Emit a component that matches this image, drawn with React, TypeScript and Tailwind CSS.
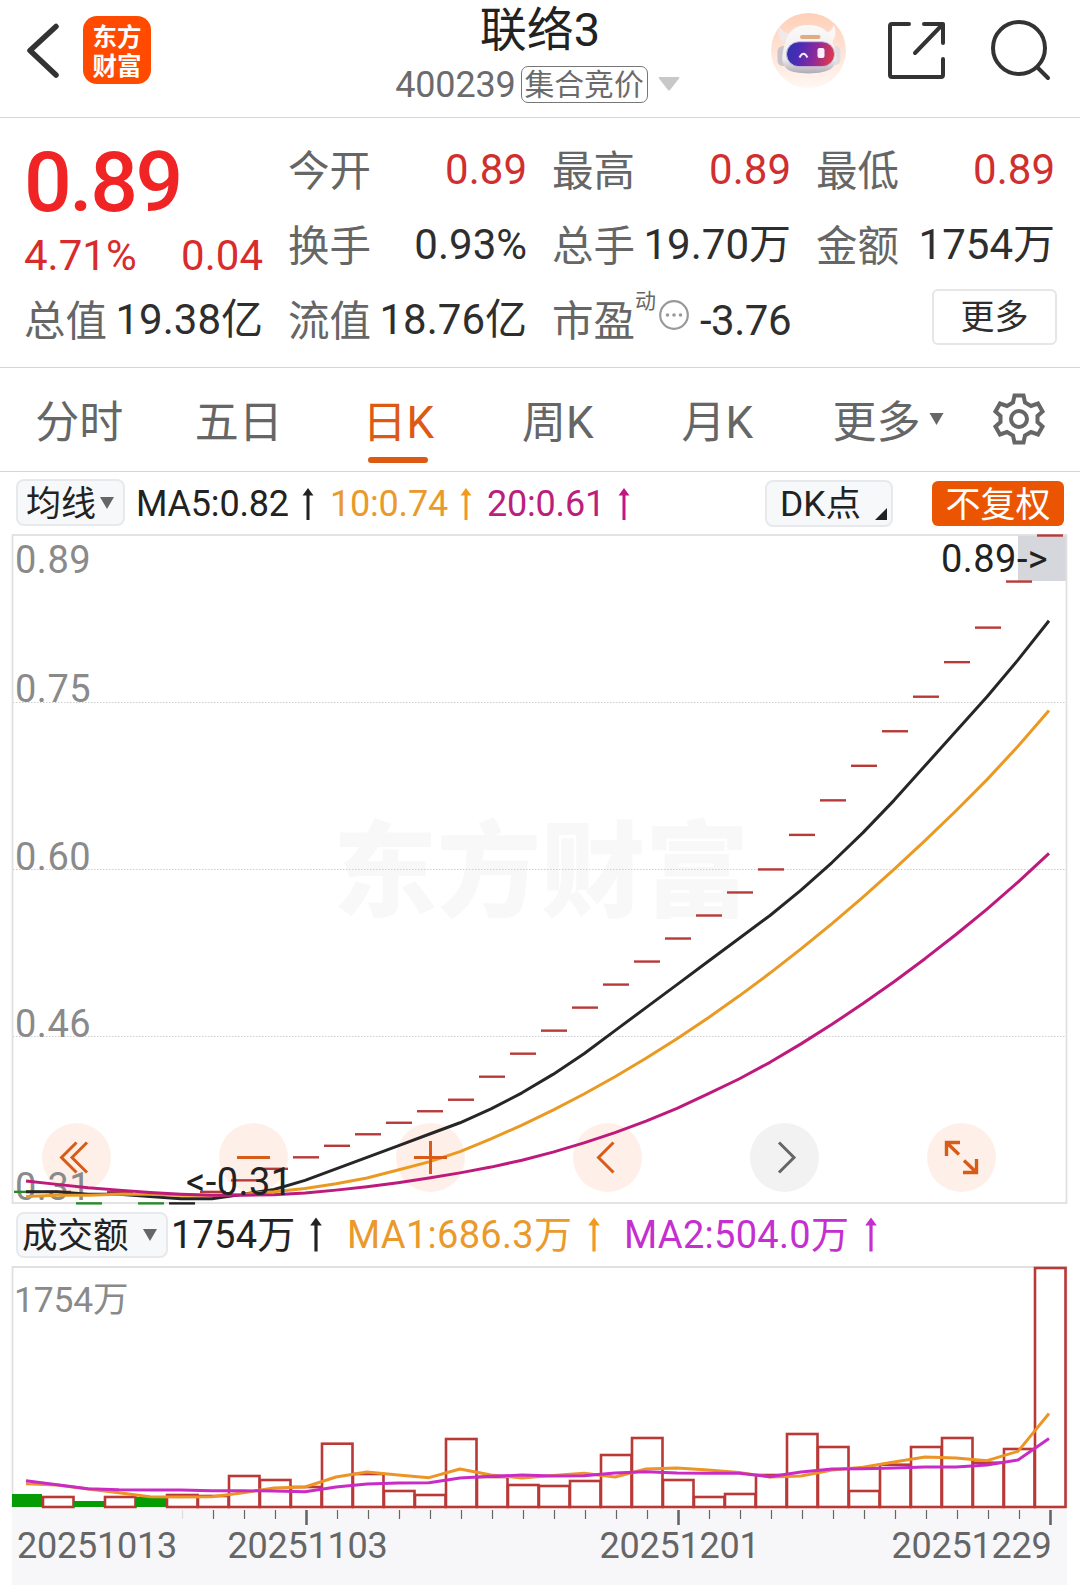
import { clsx } from 'clsx'

const closes = [
  0.32, 0.32, 0.31, 0.32, 0.31, 0.31, 0.32, 0.33, 0.34, 0.35, 0.36, 0.37, 0.38, 0.39, 0.4, 0.42, 0.44,
  0.46, 0.48, 0.5, 0.52, 0.54, 0.56, 0.58, 0.6, 0.63, 0.66, 0.69, 0.72, 0.75, 0.78, 0.81, 0.85, 0.89,
]
// closes before the visible range, only used by the averages
const history = [
  0.38, 0.37, 0.36, 0.35, 0.34, 0.34, 0.33, 0.33, 0.32, 0.31, 0.31, 0.31, 0.31, 0.31, 0.32, 0.32, 0.32,
  0.32, 0.32,
]

const volumeTops = [
  1494, 1497, 1501, 1497, 1497, 1495, 1496, 1476, 1480, 1487, 1443.7, 1474, 1491, 1495, 1439, 1477, 1485,
  1486, 1481, 1455, 1438, 1480, 1497, 1494, 1475, 1434, 1447, 1491, 1464.7, 1447, 1438, 1462.7, 1449,
  1268,
]
const volumeMa1 = [
  1483.7, 1485, 1489, 1492.7, 1496.7, 1497, 1496.7, 1492.7, 1488, 1487, 1477, 1472, 1475, 1477.7, 1469,
  1475, 1478, 1475.5, 1473.3, 1477, 1469, 1468, 1470, 1472.5, 1477, 1476, 1470, 1467.3, 1462, 1457, 1458,
  1460.7, 1451.3, 1413.5,
]
const volumeMa2 = [
  1480.7, 1484.8, 1488.7, 1489.7, 1490, 1490, 1490.7, 1490.7, 1491, 1491.7, 1487, 1484, 1483, 1482.7,
  1478, 1476.3, 1475, 1476, 1475.7, 1473, 1471.7, 1473, 1473.3, 1473.3, 1476.7, 1472, 1469, 1468.7, 1468,
  1467, 1467, 1465, 1460, 1438.5,
]

const centerX = (i: number) => 27 + i * 31
const priceY = (p: number) => 535.5 + (0.89 - p) * 1151.5
const toPoints = (ys: number[]) => ys.map((y, i) => `${centerX(i) - 1},${y}`).join(' ')

const average = (n: number) => {
  const all = [...history, ...closes]
  return closes.map((_, i) => {
    const end = history.length + i + 1
    const part = all.slice(end - n, end)
    return priceY(part.reduce((a, b) => a + b, 0) / n)
  })
}

const candleColor = (i: number) => {
  if (i === 5) return '#222222'
  return [0, 2, 4].includes(i) ? '#2a8a2a' : '#b83a38'
}

function Caret({ className }: { className?: string }) {
  return (
    <svg viewBox="0 0 14 12" className={className} fill="currentColor">
      <path d="M0 0H14L7 12Z" />
    </svg>
  )
}

function UpArrow({ className }: { className?: string }) {
  return (
    <svg viewBox="0 0 12 34" className={clsx('w-3 shrink-0', className)} fill="currentColor">
      <path d="M6 0L11.8 8H7.6V34H4.400V8H0.2Z" />
    </svg>
  )
}

function Robot() {
  return (
    <svg viewBox="0 0 75 75" className="size-[75px]">
      <defs>
        <linearGradient id="halo" x1="0" y1="0" x2="0" y2="1">
          <stop offset="0" stopColor="#ffcfb8" />
          <stop offset="1" stopColor="#fff7f3" />
        </linearGradient>
        <linearGradient id="visor" x1="0" y1="0" x2="1" y2="0.15">
          <stop offset="0" stopColor="#2b35a8" />
          <stop offset="0.3" stopColor="#4a2bb5" />
          <stop offset="0.65" stopColor="#8c2a9c" />
          <stop offset="1" stopColor="#d8384f" />
        </linearGradient>
        <linearGradient id="shell" x1="0" y1="0" x2="0" y2="1">
          <stop offset="0" stopColor="#fbf8f8" />
          <stop offset="0.7" stopColor="#efedf0" />
          <stop offset="1" stopColor="#aeaab4" />
        </linearGradient>
      </defs>
      <circle cx="37.5" cy="37.500" r="37.500" fill="url(#halo)" />
      <path d="M8.500 13Q5 23 12 30L20 21Q11 20 8.500 13Z" fill="#efe9ea" />
      <path d="M63 12Q67 22 61 29L53 20Q61 19 63 12Z" fill="#fbf7f6" />
      <rect x="6.500" y="33" width="11" height="20" rx="5.500" fill="#c9c5cb" />
      <rect x="59" y="33" width="10.500" height="19" rx="5" fill="#e2dde1" />
      <path
        d="M37 12C52 12 59 19 62 30C66 42 67 49 61 55C54 62 23 62 16 56C9 50 11 41 14 30C17 19 23 12 37 12Z"
        fill="url(#shell)"
      />
      <rect x="29" y="22" width="20.500" height="4" rx="2" fill="#dfac84" />
      <rect x="15.500" y="28.700" width="48" height="25" rx="12.500" fill="url(#visor)" stroke="#c9bfd6" />
      <path d="M28.500 44.500Q32.500 37 36.500 44.500" fill="none" stroke="#f1e9ff" strokeWidth="2" />
      <rect x="46.500" y="35" width="7" height="10" rx="2" fill="#ffeffb" />
    </svg>
  )
}

function Header() {
  return (
    <header className="flex h-[118px] border-b border-[#d6d6d6]">
      <div className="flex w-[380px] pl-[25px] pt-4">
        <svg viewBox="0 0 34 68" className="h-[68px] w-[34px]" fill="none" stroke="#333" strokeWidth="5.500">
          <path d="M31 10.500L5 34.500L31 59" strokeLinecap="round" strokeLinejoin="round" />
        </svg>
        <div className="ml-[24px] flex h-[68px] w-[68px] flex-col items-center justify-center rounded-[14px] bg-[#ff4a00] pt-[3px] text-[24.5px] leading-[29px] font-bold text-white">
          <span>东方</span>
          <span>财富</span>
        </div>
      </div>

      <div className="flex flex-1 flex-col items-center">
        <div className="h-[57px] pt-px text-[47px] leading-[58px] text-[#222]">联络3</div>
        <div className="mt-[2px] mr-[5px] flex h-[50px] items-center text-[#6b6b6b]">
          <span className="pt-[2px] text-[36px] leading-[50px] tracking-[-0.2px]">400239</span>
          <span className="ml-[5px] flex h-[37px] items-center rounded-[7px] border border-[#777] px-[3px] pt-[2px] text-[29.8px]">
            集合竞价
          </span>
          <svg viewBox="0 0 22 14" className="ml-2.5 h-[14px] w-[22px]" fill="#c8c8c8">
            <path d="M1.500 0H20.500Q22 0 21 1.500L12 13Q11 14 10 13L1 1.500Q0 0 1.500 0Z" />
          </svg>
        </div>
      </div>

      <div className="flex w-[380px] pl-[71px] pt-[13px]">
        <Robot />
        <svg
          viewBox="0 0 60 60"
          className="ml-[41px] mt-[8px] size-[60px]"
          fill="none"
          stroke="#333"
          strokeWidth="4"
          strokeLinecap="round"
          strokeLinejoin="round"
        >
          <path d="M22 3H5Q3 3 3 5V54Q3 56 5 56H54Q56 56 56 54V38M37 3H56V22M56 3L28 32" />
        </svg>
        <svg
          viewBox="0 0 62 62"
          className="ml-[43px] mt-[7px] size-[62px]"
          fill="none"
          stroke="#333"
          strokeWidth="4"
          strokeLinecap="round"
        >
          <circle cx="29" cy="28" r="26" />
          <path d="M47.500 47.500L58 58" />
        </svg>
      </div>
    </header>
  )
}

function Cell({ label, value, red }: { label: string; value: string; red?: boolean }) {
  return (
    <div className="flex justify-between whitespace-nowrap">
      <span className="-ml-px pt-[2px] text-[41.5px] text-[#666]">{label}</span>
      <span className={red ? 'text-[#d12f2f]' : 'text-[#2e2e2e]'}>{value}</span>
    </div>
  )
}

function Quote() {
  return (
    <section className="grid h-[250px] auto-rows-[75px] grid-cols-[repeat(4,238px)] gap-x-[26px] border-b border-[#d6d6d6] pt-[14px] pl-[25px] text-[42px] leading-[75px]">
      <div className="row-span-2 flex flex-col pt-[6px] text-[#d92b2b]">
        <div className="-ml-px h-[92px] text-[84px] leading-[90px] font-medium tracking-[-2.4px] text-[#f02424]">
          0.89
        </div>
        <div className="-ml-px flex justify-between leading-[56px]">
          <span>4.71%</span>
          <span>0.04</span>
        </div>
      </div>
      <Cell label="今开" value="0.89" red />
      <Cell label="最高" value="0.89" red />
      <Cell label="最低" value="0.89" red />
      <Cell label="换手" value="0.93%" />
      <Cell label="总手" value="19.70万" />
      <Cell label="金额" value="1754万" />
      <Cell label="总值" value="19.38亿" />
      <Cell label="流值" value="18.76亿" />
      <div className="flex whitespace-nowrap">
        <span className="-ml-px pt-[2px] text-[41.5px] text-[#666]">市盈</span>
        <span className="h-9 pt-px text-[21px] leading-9 text-[#666]">动</span>
        <svg viewBox="0 0 30 30" className="ml-[3px] mt-[18px] size-[30px]">
          <circle cx="15" cy="15" r="13.800" fill="none" stroke="#999" strokeWidth="2.200" />
          <circle cx="8.500" cy="15" r="1.800" fill="#999" />
          <circle cx="15" cy="15" r="1.800" fill="#999" />
          <circle cx="21.500" cy="15" r="1.800" fill="#999" />
        </svg>
        <span className="ml-auto pt-px tracking-[-0.5px] text-[#2e2e2e]">-3.76</span>
      </div>
      <div className="flex justify-end">
        <button className="mt-[7px] -mr-[2px] h-[56px] w-[125px] rounded-md border-2 border-[#e6e6e6] text-[34px] leading-[53px] text-[#2e2e2e]">
          更多
        </button>
      </div>
    </section>
  )
}

const tabs = ['分时', '五日', '日K', '周K', '月K']

function Tabs() {
  return (
    <nav className="flex h-[104px] border-b border-[#d6d6d6] text-[44px] leading-[110px] text-[#666]">
      {tabs.map((tab) => (
        <div
          key={tab}
          className={clsx('flex w-[159.5px] flex-col items-center', tab === '日K' && 'text-[#dc5a14]')}
        >
          <span className="-ml-px h-[89px]">{tab}</span>
          {tab === '日K' && <span className="-ml-[2px] h-[6px] w-[60px] rounded-full bg-[#dc5a14]" />}
        </div>
      ))}
      <div className="ml-[35px] flex items-start">
        更多
        <Caret className="ml-2 mt-[45px] h-3 w-[15px]" />
      </div>
      <svg
        viewBox="0 0 52 52"
        className="ml-[49px] mt-[25px] size-[52px]"
        fill="none"
        stroke="#666"
        strokeWidth="4"
      >
        <path d="M21.500 2.500H30.500L32 9.500L38 13L45 10.500L49.500 18.500L44.500 23V29L49.500 33.500L45 41.500L38 39L32 42.500L30.500 49.500H21.500L20 42.500L14 39L7 41.500L2.500 33.500L7.500 29V23L2.500 18.500L7 10.500L14 13L20 9.500Z" />
        <circle cx="26" cy="26" r="8" />
      </svg>
    </nav>
  )
}

function PriceToolbar() {
  return (
    <div className="flex h-[62px] pt-[7px] pl-4 text-[36px] leading-[51px] whitespace-nowrap">
      <button className="flex h-[47px] w-[109px] items-center rounded-lg border-2 border-[#e8e9ec] bg-[#f7f8fa] pt-[3px] pl-2 text-[35px] text-[#222]">
        均线
        <Caret className="mb-[3px] ml-1 h-3 w-[14px] text-[#666]" />
      </button>
      <span className="ml-[11px] w-[166px] tracking-[-0.2px] text-[#222]">MA5:0.82</span>
      <UpArrow className="mt-[9px] h-[32px] text-[#222]" />
      <span className="ml-4 w-[130px] tracking-[-0.2px] text-[#ea9a2b]">10:0.74</span>
      <UpArrow className="mt-[9px] h-[32px] text-[#f39a1c]" />
      <span className="ml-[15px] w-[131px] tracking-[-0.2px] text-[#bb1f7c]">20:0.61</span>
      <UpArrow className="mt-[9px] h-[32px] text-[#c4167f]" />
      <button className="mt-px ml-[135px] flex h-[47px] w-[128px] items-center rounded-lg border-2 border-[#e8e9ec] bg-[#f7f8fa] pt-[2px] pl-[13px] text-[35.5px] text-[#222]">
        DK点
        <svg viewBox="0 0 12 12" className="ml-auto mr-1 mt-[18px] size-3" fill="#222">
          <path d="M12 0V12H0Z" />
        </svg>
      </button>
      <button className="mt-[2px] ml-[39px] h-[45px] w-[132px] rounded-md bg-[#eb5502] text-[35px] leading-[49px] text-white">
        不复权
      </button>
    </div>
  )
}

const controls = [76.5, 253.5, 430.5, 607.5, 784.5, 961.5]

function PriceChart() {
  return (
    <svg viewBox="0 534 1080 675" className="block h-[675px] w-[1080px]" fontSize="38">
      <text x="333" y="909" fontSize="104" fontWeight="900" fill="#f8f8f8">
        东方财富
      </text>
      {controls.map((x, i) => (
        <circle key={x} cx={x} cy="1157.500" r="34.500" fill={i === 4 ? '#f2f2f2' : '#fef0e8'} />
      ))}
      <rect x="1018" y="535" width="49" height="46" fill="#d5d7dc" />
      <rect x="12.500" y="535" width="1054" height="668" fill="none" stroke="#e0e0e0" strokeWidth="1.800" />
      {[702.5, 869.5, 1036.5].map((y) => (
        <line key={y} x1="13" x2="1066" y1={y} y2={y} stroke="#cfcfcf" strokeDasharray="1.500 1.500" />
      ))}

      <g fill="#8a8a8a" letterSpacing="0.500">
        <text x="15" y="573">0.89</text>
        <text x="15" y="702">0.75</text>
        <text x="15" y="870">0.60</text>
        <text x="15" y="1037">0.46</text>
        <text x="15" y="1199.500">0.31</text>
      </g>

      {closes.map((c, i) => (
        <line
          key={i}
          x1={centerX(i) - 13}
          x2={centerX(i) + 13}
          y1={priceY(c)}
          y2={priceY(c)}
          stroke={candleColor(i)}
          strokeWidth="2.400"
        />
      ))}

      <g fill="none" strokeWidth="3" strokeLinejoin="round">
        <polyline points={toPoints(average(5))} stroke="#262626" />
        <polyline points={toPoints(average(10))} stroke="#ea9a22" />
        <polyline points={toPoints(average(20))} stroke="#bd1a7c" />
      </g>

      <g fill="#222" letterSpacing="0.450">
        <text x="186" y="1195">{'<-0.31'}</text>
        <text x="941" y="571.500">{'0.89->'}</text>
      </g>

      <g fill="none" stroke="#d85c18" strokeWidth="3">
        <path d="M76.500 1142.500L61.500 1157.500L76.500 1172.500M87 1142.500L72 1157.500L87 1172.500" />
        <path d="M237 1157.500H270" />
        <path d="M414 1157.500H447M430.500 1141V1174" />
        <path d="M613.500 1142.500L598.500 1157.500L613.500 1172.500" />
        <path d="M779 1142.500L794 1157.500L779 1172.500" stroke="#666" />
        <path d="M960 1142.500H946.500V1156M946.500 1142.500L959 1154.500M963 1172.500H976.500V1159M976.500 1172.500L964 1160.500" strokeWidth="3.400" />
      </g>
    </svg>
  )
}

function VolumeToolbar() {
  return (
    <div className="flex h-[52px] pt-[3px] pl-4 text-[38px] leading-[47px] whitespace-nowrap">
      <button className="flex h-[46px] w-[152px] items-center rounded-lg border-2 border-[#e8e9ec] bg-[#f7f8fa] pt-[3px] pl-1 text-[35.5px] text-[#222]">
        成交额
        <Caret className="mb-[3px] ml-[14px] h-3 w-[14px] text-[#666]" />
      </button>
      <span className="ml-[3px] w-[139px] tracking-[0.2px] text-[#222]">1754万</span>
      <UpArrow className="mt-[5px] h-[35px] text-[#222]" />
      <span className="ml-[25px] w-[241px] tracking-[0.3px] text-[#ea9a2b]">MA1:686.3万</span>
      <UpArrow className="mt-[5px] h-[35px] text-[#f39a1c]" />
      <span className="ml-[24px] w-[241px] tracking-[0.3px] text-[#c42fcf]">MA2:504.0万</span>
      <UpArrow className="mt-[5px] h-[35px] text-[#c42fcf]" />
    </div>
  )
}

function VolumeChart() {
  return (
    <svg viewBox="0 1261 1080 324" className="block h-[324px] w-[1080px]" fontSize="36">
      <rect x="12" y="1509" width="1055" height="76" fill="#f7f7fa" />
      <path d="M12.500 1508V1267H1066.500V1508" fill="none" stroke="#e0e0e0" strokeWidth="1.800" />
      <text x="14" y="1311.500" fontSize="35.500" letterSpacing="-0.200" fill="#8a8a8a">
        1754万
      </text>

      {volumeTops.map((top, i) =>
        [0, 2, 4].includes(i) ? (
          <rect key={i} x={centerX(i) - 15} y={top} width="30" height={1507 - top} fill="#069c06" />
        ) : (
          <rect
            key={i}
            x={centerX(i) - 15}
            y={top}
            width="30.500"
            height={1507 - top}
            fill="#fff"
            stroke="#ba3836"
            strokeWidth="2.600"
          />
        ),
      )}

      <g fill="none" strokeWidth="2.900" strokeLinejoin="round">
        <polyline points={toPoints(volumeMa1)} stroke="#ec9426" />
        <polyline points={toPoints(volumeMa2)} stroke="#c92cc4" />
      </g>

      {closes.map((_, i) => {
        if (i < 5) return null
        const major = i % 12 === 9
        return (
          <line
            key={i}
            x1={centerX(i) + 0.5}
            x2={centerX(i) + 0.5}
            y1="1510"
            y2={major ? 1525 : 1519}
            stroke={i === 5 ? '#ddd' : '#666'}
            strokeWidth={major ? 2.6 : 1.2}
          />
        )
      })}

      <g fill="#666" letterSpacing="-0.250">
        <text x="17" y="1557.500">20251013</text>
        <text x="227.500" y="1557.500">20251103</text>
        <text x="599.500" y="1557.500">20251201</text>
        <text x="891.500" y="1557.500">20251229</text>
      </g>
    </svg>
  )
}

export default function App() {
  return (
    <main className="h-[1585px] w-[1080px] overflow-hidden bg-white font-['Roboto','Noto_Sans_CJK_SC',sans-serif]">
      <Header />
      <Quote />
      <Tabs />
      <PriceToolbar />
      <PriceChart />
      <VolumeToolbar />
      <VolumeChart />
    </main>
  )
}
